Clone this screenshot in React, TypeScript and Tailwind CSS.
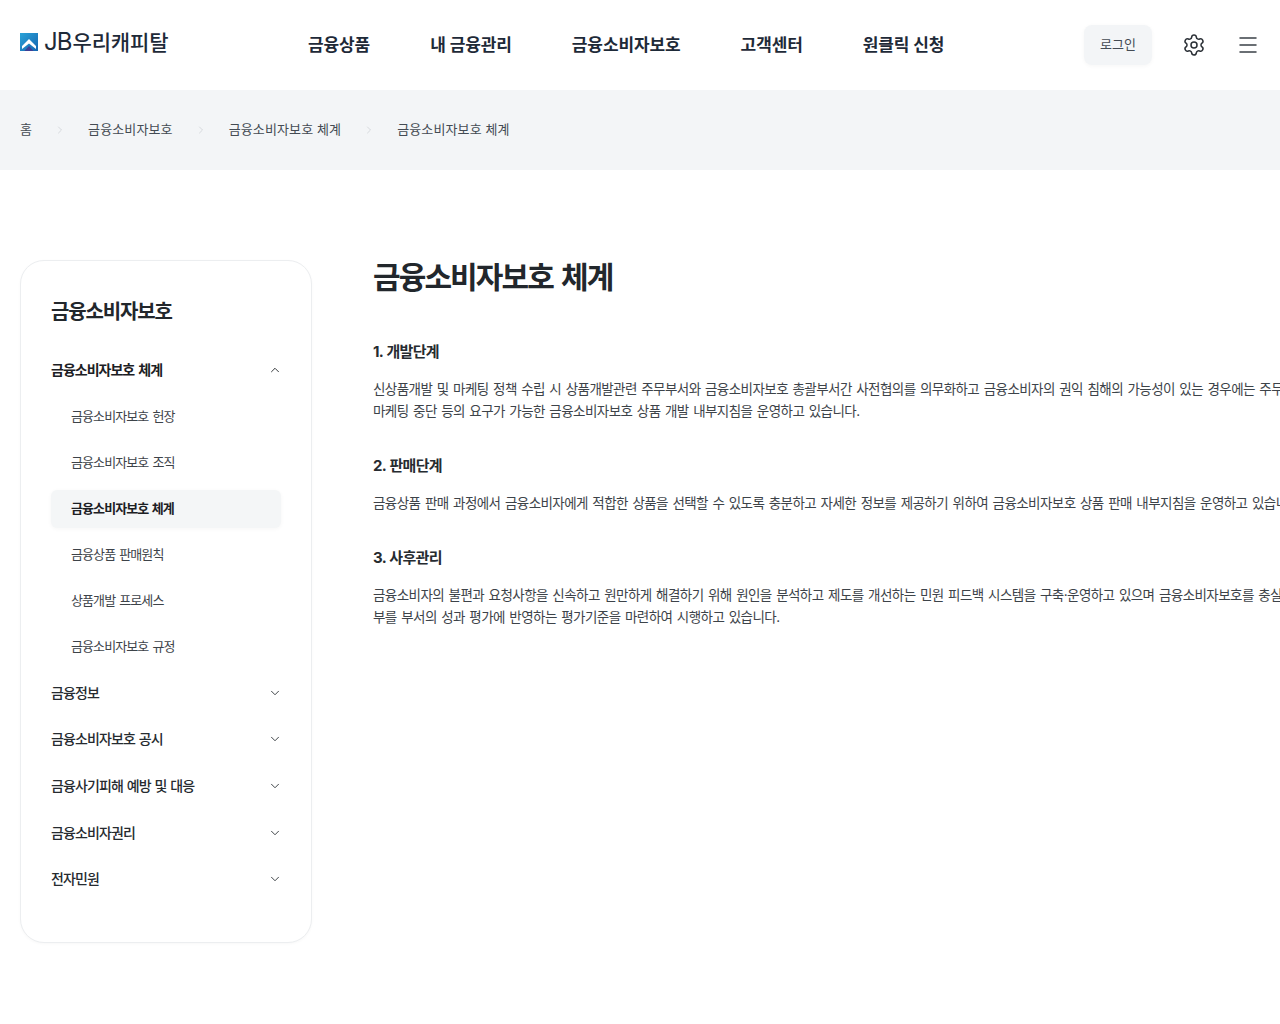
import { ChevronDown, ChevronRight, ChevronUp, Menu, Settings } from "lucide-react";

const navItems = ["금융상품", "내 금융관리", "금융소비자보호", "고객센터", "원클릭 신청"];
const crumbs = ["금융소비자보호", "금융소비자보호 체계", "금융소비자보호 체계"];
const subItems = [
  { label: "금융소비자보호 헌장" },
  { label: "금융소비자보호 조직" },
  { label: "금융소비자보호 체계", active: true },
  { label: "금융상품 판매원칙" },
  { label: "상품개발 프로세스" },
  { label: "금융소비자보호 규정" },
];
const sideItems = ["금융정보", "금융소비자보호 공시", "금융사기피해 예방 및 대응", "금융소비자권리", "전자민원"];
const sections = [
  {
    title: "1. 개발단계",
    lines: [
      "신상품개발 및 마케팅 정책 수립 시 상품개발관련 주무부서와 금융소비자보호 총괄부서간 사전협의를 의무화하고 금융소비자의 권익 침해의 가능성이 있는 경우에는 주무부서에",
      "마케팅 중단 등의 요구가 가능한 금융소비자보호 상품 개발 내부지침을 운영하고 있습니다.",
    ],
  },
  {
    title: "2. 판매단계",
    lines: [
      "금융상품 판매 과정에서 금융소비자에게 적합한 상품을 선택할 수 있도록 충분하고 자세한 정보를 제공하기 위하여 금융소비자보호 상품 판매 내부지침을 운영하고 있습니다.",
    ],
  },
  {
    title: "3. 사후관리",
    lines: [
      "금융소비자의 불편과 요청사항을 신속하고 원만하게 해결하기 위해 원인을 분석하고 제도를 개선하는 민원 피드백 시스템을 구축·운영하고 있으며 금융소비자보호를 충실히 이행하는지 여",
      "부를 부서의 성과 평가에 반영하는 평가기준을 마련하여 시행하고 있습니다.",
    ],
  },
];

function Logo() {
  return (
    <div className="flex w-[149px] shrink-0 items-center gap-[6px] pb-[6px]">
      <svg width="18" height="18" viewBox="0 0 18 18" className="shrink-0">
        <defs>
          <linearGradient id="logoBlue" x1="0" y1="0" x2="1" y2="1">
            <stop offset="0" stopColor="#2aa3d8" />
            <stop offset="1" stopColor="#1565b0" />
          </linearGradient>
        </defs>
        <rect width="18" height="18" fill="url(#logoBlue)" />
        <path d="M2 13 9 6l7 7v3l-7-5.500L2 16z" fill="#fff" />
        <path d="M4.500 18 9 13l4.500 5z" fill="#3d3f96" />
      </svg>
      <span className="flex items-baseline whitespace-nowrap text-[#1e2a38]">
        <span className="font-['Inter'] text-[24px] leading-none tracking-[-1px]">JB</span>
        <span className="ml-[1px] text-[21px] leading-none font-medium tracking-[-0.1px]">우리캐피탈</span>
      </span>
    </div>
  );
}

function Header() {
  return (
    <header className="flex h-[90px] items-center bg-white px-5">
      <Logo />
      <nav className="ml-[139px] flex items-center gap-[60px] pt-[2px]">
        {navItems.map((item) => (
          <a key={item} className="text-[17px] font-bold tracking-[-0.1px] text-[#1e2a38]">
            {item}
          </a>
        ))}
      </nav>
      <div className="ml-auto flex items-center">
        <button className="h-10 w-[68px] rounded-lg bg-[#f3f5f7] text-[13px] text-[#444b53] shadow-[0_1px_4px_rgba(0,0,0,0.04)]">
          로그인
        </button>
        <Settings className="ml-[30px] h-6 w-6 text-[#2b3036]" strokeWidth={1.5} />
        <Menu className="ml-[30px] h-6 w-6 text-[#3a4047]" strokeWidth={1.5} />
      </div>
    </header>
  );
}

function Breadcrumb() {
  return (
    <div className="flex h-20 items-center bg-[#f3f5f7] px-5 text-[13px] tracking-[0.12px] text-[#444b53]">
      <span>홈</span>
      {crumbs.map((crumb, i) => (
        <div key={i} className="flex items-center">
          <ChevronRight className="mx-[22px] h-3 w-3 text-[#c4c9ce]" strokeWidth={1.25} />
          <span>{crumb}</span>
        </div>
      ))}
    </div>
  );
}

function Sidebar() {
  return (
    <aside className="h-[683px] w-[292px] shrink-0 rounded-3xl border border-[#eceef0] bg-white px-[30px] pt-[37px] shadow-[0_1px_3px_rgba(0,0,0,0.03)]">
      <h2 className="text-[20px] leading-7 font-bold tracking-[-1.15px] text-[#22272c]">금융소비자보호</h2>
      <div className="mt-5 flex h-[46px] items-center justify-between text-[14px] font-bold tracking-[-1px] [word-spacing:1.8px] text-[#1c2024]">
        <span>금융소비자보호 체계</span>
        <ChevronUp className="mt-[2px] -mr-[1px] h-[14px] w-[14px]" strokeWidth={1.5} />
      </div>
      <ul className="-mt-[2px]">
        {subItems.map((item) => (
          <li
            key={item.label}
            className={`my-[8px] flex h-[38px] items-center rounded-md pl-5 text-[13px] tracking-[-0.9px] [word-spacing:1.2px] ${
              item.active
                ? "bg-[#f4f6f7] font-bold text-[#1c2024] shadow-[0_1px_4px_rgba(0,0,0,0.04)]"
                : "text-[#3d4349]"
            }`}
          >
            {item.label}
          </li>
        ))}
      </ul>
      <ul className="-mt-[5px]">
        {sideItems.map((item) => (
          <li
            key={item}
            className="flex h-[46.6px] items-center justify-between text-[14px] font-medium tracking-[-0.9px] [word-spacing:1px] text-[#262b30]"
          >
            <span>{item}</span>
            <ChevronDown className="mt-[1px] -mr-[1px] h-[14px] w-[14px]" strokeWidth={1.5} />
          </li>
        ))}
      </ul>
    </aside>
  );
}

export default function App() {
  return (
    <div className="h-[1024px] w-full overflow-hidden bg-white font-['Inter','Noto_Sans_CJK_KR',sans-serif]">
      <Header />
      <Breadcrumb />
      <div className="flex gap-[61px] pt-[90px] pl-5">
        <Sidebar />
        <main className="min-w-0 flex-1 overflow-hidden">
          <h1 className="pt-[1px] text-[30px] leading-8 font-semibold tracking-[-1.9px] [word-spacing:2.5px] text-[#22272c]">
            금융소비자보호 체계
          </h1>
          <div className="mt-[47px]">
            {sections.map((section) => (
              <section key={section.title} className="mb-8">
                <h3 className="text-[15px] leading-[24px] font-bold tracking-[-0.7px] [word-spacing:1px] text-[#262b30]">{section.title}</h3>
                <div className="mt-[14px] text-[13.5px] leading-[22px] tracking-[-0.56px] [word-spacing:1.2px] text-[#3d4349]">
                  {section.lines.map((line) => (
                    <p key={line} className="whitespace-nowrap">
                      {line}
                    </p>
                  ))}
                </div>
              </section>
            ))}
          </div>
        </main>
      </div>
    </div>
  );
}
